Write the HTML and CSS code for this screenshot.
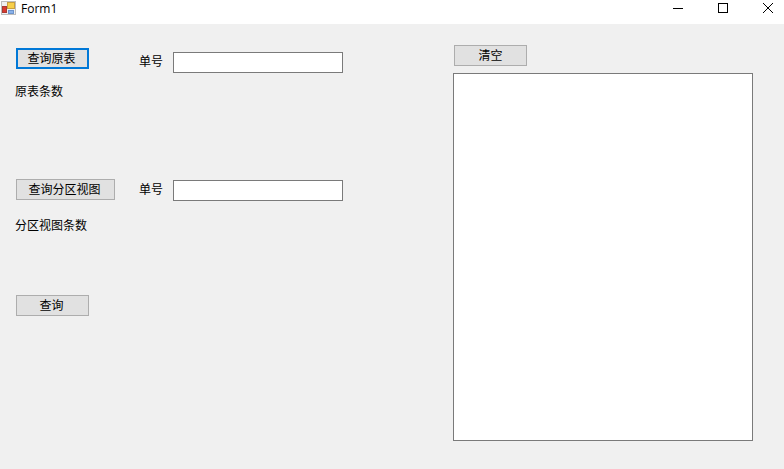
FILE: index.html
```html
<!DOCTYPE html>
<html>
<head>
    <meta charset="UTF-8" />
    <title>Form1</title>
    <link rel="stylesheet" href="styles.css">
</head>
<body>
    <div class="titlebar">
        <svg class="app-icon" width="16" height="16" viewBox="0 0 16 16">
            <rect x="0.5" y="1.5" width="14" height="13" fill="#f0f0f0" stroke="#bdbdbd"/>
            <rect x="6.5" y="2.5" width="7" height="6" fill="#f7cf4a" stroke="#c9a040"/>
            <rect x="1.5" y="6.5" width="4" height="6" fill="#d8392f" stroke="#a83a34"/>
            <rect x="7.5" y="10.5" width="5" height="3" fill="#8ab2ea" stroke="#6d94cc"/>
        </svg>
        <span class="title">Form1</span>
        <div class="window-buttons">
            <svg width="45" height="16" viewBox="0 0 45 16"><path d="M18 8.5h10" stroke="#000" fill="none"/></svg>
            <svg width="45" height="16" viewBox="0 0 45 16"><rect x="18.5" y="3.5" width="9" height="9" stroke="#000" fill="none"/></svg>
            <svg width="45" height="16" viewBox="0 0 45 16"><path d="M18 3l10 10M28 3L18 13" stroke="#000" fill="none"/></svg>
        </div>
    </div>
    <div class="form">
        <div class="left">
            <div class="row">
                <button class="button small focused">查询原表</button>
                <label class="field-label">单号</label>
                <input class="textbox" type="text">
            </div>
            <div class="count first-count">原表条数</div>
            <div class="row second-row">
                <button class="button wide">查询分区视图</button>
                <label class="field-label">单号</label>
                <input class="textbox" type="text">
            </div>
            <div class="count second-count">分区视图条数</div>
            <button class="button small query">查询</button>
        </div>
        <div class="right">
            <button class="button small clear">清空</button>
            <textarea class="output"></textarea>
        </div>
    </div>
</body>
</html>
```

FILE: styles.css
```css
html, body {
    height: 100%;
}
body {
    margin: 0;
    display: flex;
    flex-direction: column;
    overflow: hidden;
    background-color: #f0f0f0;
    color: #000000;
    font-family: "Noto Sans CJK SC", "Noto Sans", sans-serif;
    font-size: 12px;
}

.titlebar {
    display: flex;
    align-items: center;
    height: 24px;
    flex: none;
    padding-left: 1px;
    background-color: #ffffff;
}
.app-icon {
    margin-bottom: 8px;
}
.title {
    margin-left: 4px;
    margin-bottom: 6px;
    font-family: "Open Sans", "Noto Sans", sans-serif;
    font-size: 12px;
    line-height: 16px;
}
.window-buttons {
    display: flex;
    margin-left: auto;
    margin-right: -6px;
    margin-bottom: 8px;
}

.form {
    display: flex;
    flex: 1;
    padding: 21px 0 0 16px;
}
.left {
    display: flex;
    flex-direction: column;
    align-items: flex-start;
    width: 437px;
    padding-top: 3px;
}
.right {
    display: flex;
    flex-direction: column;
    align-items: flex-start;
}

.row {
    display: flex;
    align-items: flex-start;
    height: 25px;
}
.second-row {
    margin-top: 79px;
}

.button {
    box-sizing: border-box;
    height: 21px;
    padding: 0 2px 2px 0;
    border: 1px solid #adadad;
    border-radius: 0;
    background-color: #e1e1e1;
    color: #000000;
    font-family: inherit;
    font-size: 12px;
    line-height: 17px;
}
.small {
    width: 73px;
}
.wide {
    width: 99px;
}
.focused {
    border: 2px solid #0078d7;
    line-height: 13px;
}
.clear {
    margin-left: 1px;
    padding-right: 0;
}
.query {
    margin-top: 61px;
}

.field-label {
    width: 34px;
    margin-left: 50px;
    margin-top: 4px;
    line-height: 18px;
}
.second-row .field-label {
    margin-left: 24px;
    margin-top: 1px;
}
.textbox {
    box-sizing: border-box;
    width: 170px;
    height: 21px;
    margin-top: 4px;
    border: 1px solid #7a7a7a;
    border-radius: 0;
    background-color: #ffffff;
    outline: none;
}
.second-row .textbox {
    margin-top: 1px;
}

.count {
    margin-left: -1px;
    line-height: 18px;
}
.first-count {
    margin-top: 9px;
}
.second-count {
    margin-top: 12px;
}

.output {
    box-sizing: border-box;
    display: block;
    width: 300px;
    height: 368px;
    margin: 7px 0 0 0;
    padding: 0;
    border: 1px solid #7a7a7a;
    border-radius: 0;
    background-color: #ffffff;
    resize: none;
    outline: none;
}
```
